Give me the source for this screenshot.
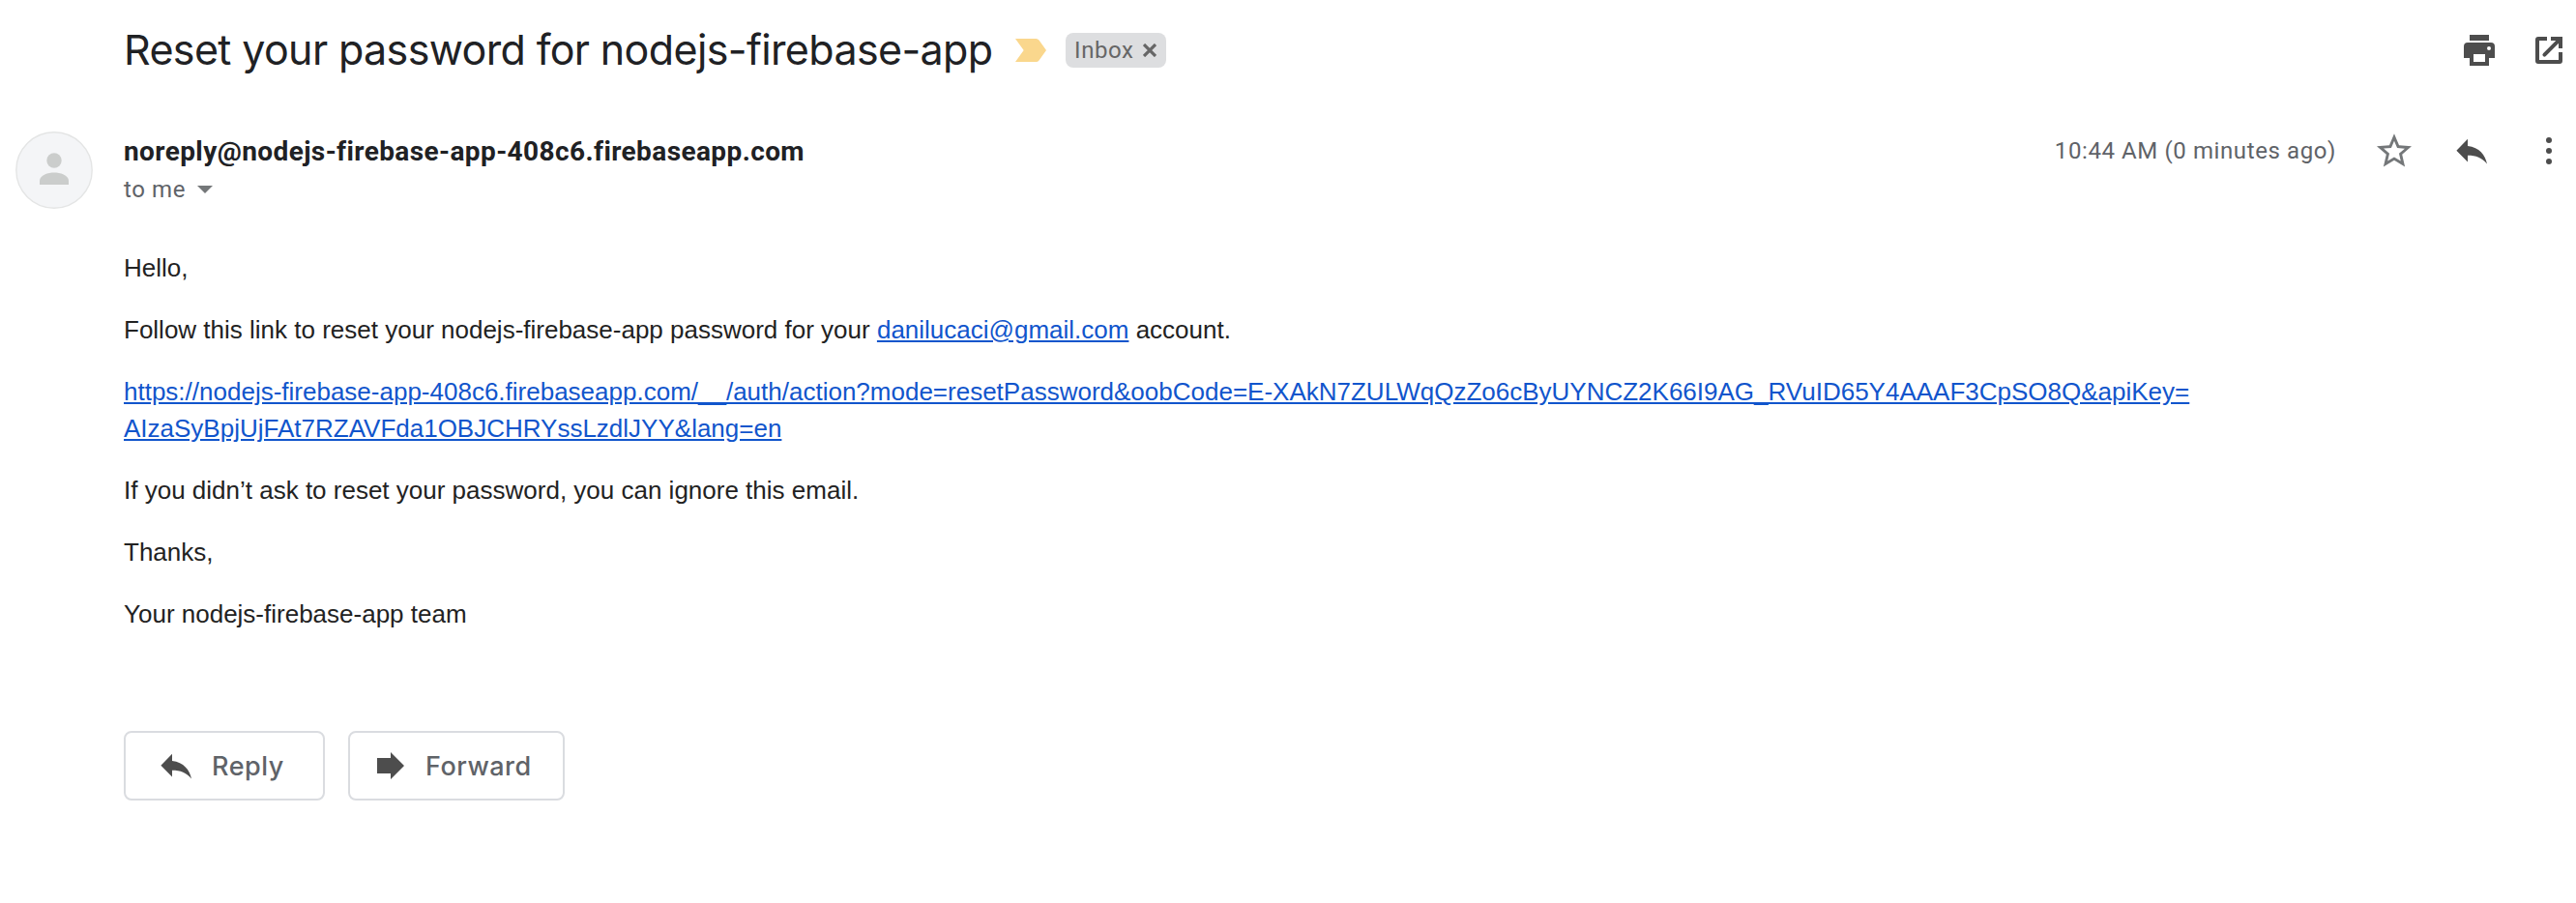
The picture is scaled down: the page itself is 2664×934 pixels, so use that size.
<script>
  const resetLines = [
    'https://nodejs-firebase-app-408c6.firebaseapp.com/__/auth/action?mode=resetPassword&oobCode=E-XAkN7ZULWqQzZo6cByUYNCZ2K66I9AG_RVuID65Y4AAAF3CpSO8Q&apiKey=',
    'AIzaSyBpjUjFAt7RZAVFda1OBJCHRYssLzdlJYY&lang=en'
  ];
</script>

<main class="mail">
  <header class="subject">
    <h1>Reset your password for nodejs-firebase-app</h1>
    <svg class="important" viewBox="0 0 32 24"><path d="M0 0H21.500Q23.300 0 24.500 1.500L32 12L24.500 22.500Q23.300 24 21.500 24H0L8.700 12Z" fill="#fad78d" /></svg>
    <span class="chip">Inbox
      <svg class="close" viewBox="0 0 14 14"><path d="M1 1L13 13M13 1L1 13" stroke="#666" stroke-width="3.2" /></svg>
    </span>
    <div class="tools">
      <svg class="icon" viewBox="0 0 20 20"><path fill="#4d4d4d" fill-rule="evenodd" d="M5 2h10v3H5zM4 6h12a2 2 0 0 1 2 2v6h-3v4H5v-4H2V8a2 2 0 0 1 2-2zM7 12v4h6v-4zM15 8a1 1 0 1 0 0 2a1 1 0 0 0 0-2z" /></svg>
      <svg class="icon" viewBox="0 0 20 20"><path fill="#4d4d4d" d="M9 3v2H5v10h10v-4h2v4.500a1.500 1.500 0 0 1-1.500 1.500h-11A1.500 1.500 0 0 1 3 15.500v-11A1.500 1.500 0 0 1 4.500 3zM11 3h6v6h-2V6.400l-6.600 6.600a.7.7 0 0 1-1.400-1.400L13.600 5H11z" /></svg>
    </div>
  </header>

  <section class="sender">
    <svg class="avatar" viewBox="0 0 80 80">
      <circle cx="40" cy="40" r="39.200" fill="#f4f5f7" stroke="#e4e5e5" stroke-width="1.400" />
      <circle cx="40" cy="30" r="7.700" fill="#cbcdcc" />
      <path d="M25 55V51C25 45 34 42.500 40 42.500S55 45 55 51V55Z" fill="#cbcdcc" />
    </svg>
    <div class="who">
      <strong>noreply@nodejs-firebase-app-408c6.firebaseapp.com</strong>
      <div class="to">to me <i class="caret"></i></div>
    </div>
    <div class="meta">
      <time>10:44 AM (0 minutes ago)</time>
      <svg class="icon" viewBox="0.9 0.720 22.220 22.220"><path fill="#747779" d="M22 9.240l-7.190-.620L12 2 9.190 8.630 2 9.240l5.460 4.730L5.820 21 12 17.270 18.180 21l-1.630-7.030L22 9.240zM12 15.400l-3.760 2.270 1-4.280-3.320-2.880 4.380-.380L12 6.100l1.710 4.040 4.380.380-3.320 2.880 1 4.280L12 15.400z" /></svg>
      <svg class="icon" viewBox="0 0 20 20"><path fill="#4d4d4d" d="M8 7.500V3.900L2.200 9.900l5.800 5.900v-3.400c4.300 0 7.400 1.200 10 4.400-.900-4.500-4-8.700-10-9.300z" /></svg>
      <svg class="icon" viewBox="0 0 20 20"><g fill="#4d4d4d"><circle cx="10" cy="4.500" r="1.500" /><circle cx="10" cy="10" r="1.500" /><circle cx="10" cy="15.500" r="1.500" /></g></svg>
    </div>
  </section>

  <article class="body">
    <p>Hello,</p>
    <p>Follow this link to reset your nodejs-firebase-app password for your <span class="link">danilucaci@gmail.com</span> account.</p>
    <p class="link">{resetLines[0]}<br />{resetLines[1]}</p>
    <p>If you didn’t ask to reset your password, you can ignore this email.</p>
    <p>Thanks,</p>
    <p>Your nodejs-firebase-app team</p>
  </article>

  <footer class="actions">
    <button class="btn first">
      <svg class="icon" viewBox="0 0 20 20"><path fill="#4d4d4d" d="M8 7.500V3.900L2.200 9.900l5.800 5.900v-3.400c4.300 0 7.400 1.200 10 4.400-.900-4.500-4-8.700-10-9.300z" /></svg>
      <span>Reply</span>
    </button>
    <button class="btn second">
      <svg class="icon" viewBox="0 0 40 40"><path fill="#4d4d4d" d="M6 12H20V6L34 20L20 34V28H6Z" /></svg>
      <span>Forward</span>
    </button>
  </footer>
</main>

<style>
  :global(body) { background: #fff; }
  .mail { box-sizing: border-box; width: 2664px; height: 934px; padding-top: 20px; font-family: Roboto, sans-serif; color: #202124; overflow: hidden; }
  svg { display: block; flex: none; }
  .icon { width: 40px; height: 40px; }
  .subject { display: flex; align-items: center; height: 64px; padding: 0 8px 0 128px; }
  h1 { margin: 0; width: 922px; padding-bottom: 3px; box-sizing: border-box; font: 400 43px Inter, sans-serif; white-space: nowrap; letter-spacing: -0.63px; }
  .important { width: 32px; height: 24px; }
  .chip { display: flex; align-items: center; box-sizing: border-box; height: 36px; width: 104px; margin-left: 20px; padding-left: 9px; gap: 9px; border-radius: 8px; background: #dddee0; color: #666; font-size: 24px; letter-spacing: 0.6px; }
  .close { width: 14px; height: 14px; }
  .tools { display: flex; gap: 32px; margin-left: auto; }
  .sender { display: flex; height: 80px; margin-top: 52px; padding: 0 8px 0 16px; }
  .avatar { width: 80px; height: 80px; }
  .who { margin-left: 32px; }
  strong { display: block; height: 40px; font-size: 28px; line-height: 42px; font-weight: 700; letter-spacing: 0.4px; }
  .to { display: flex; align-items: center; height: 40px; gap: 12px; color: #5f6368; font-size: 24px; letter-spacing: 0.6px; }
  .caret { border: solid transparent; border-width: 8px 8px 0; border-top-color: #747779; }
  .meta { display: flex; align-items: center; height: 40px; margin-left: auto; gap: 40px; color: #5f6368; font-size: 24px; letter-spacing: 0.6px; }
  .body { margin-top: 42px; padding-left: 128px; font: 26px/38px "Liberation Sans", sans-serif; color: #222; }
  p { margin: 0 0 26px; white-space: nowrap; }
  .link { color: #1155cc; text-decoration: underline; }
  .actions { display: flex; gap: 24px; margin-top: 102px; padding-left: 128px; }
  .btn { display: flex; align-items: center; box-sizing: border-box; height: 72px; border: 2px solid #dadce0; border-radius: 8px; background: #fff; padding: 0; color: #5f6368; font: 500 27px Inter, sans-serif; letter-spacing: 0.5px; }
  .first { width: 208px; padding-left: 32px; gap: 17px; }
  .second { width: 224px; padding-left: 22px; gap: 16px; }
</style>
